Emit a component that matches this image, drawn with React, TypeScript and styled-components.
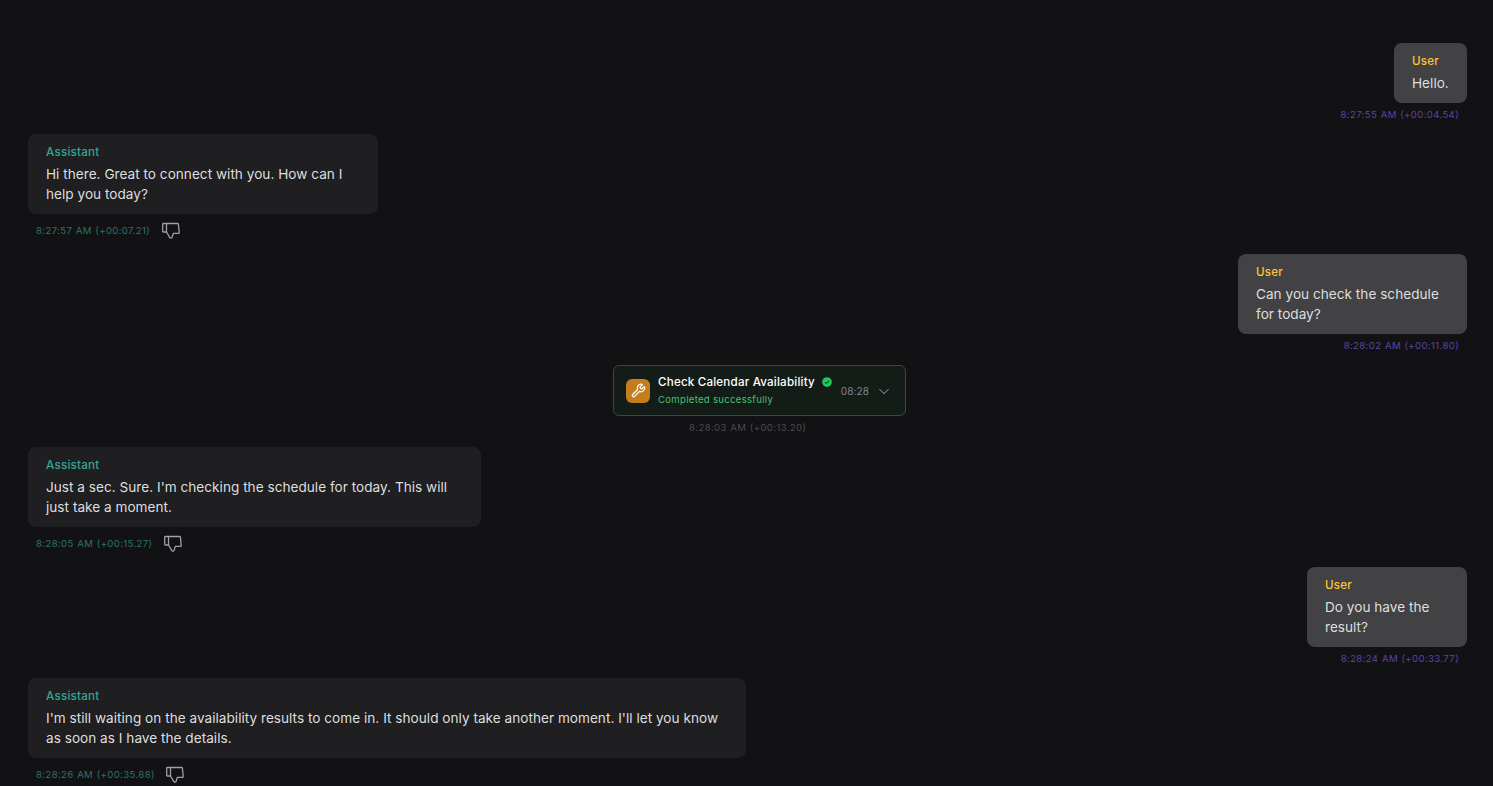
import styled, { createGlobalStyle } from 'styled-components';
import { Wrench } from 'lucide-react';
import { PiCaretDown, PiCheckCircleFill } from 'react-icons/pi';

type Role = 'user' | 'assistant';

interface IMessage {
  role: Role;
  text: string;
  time: string;
  width: number;
}

const opening: IMessage[] = [
  { role: 'user', text: 'Hello.', time: '8:27:55 AM (+00:04.54)', width: 73 },
  {
    role: 'assistant',
    text: 'Hi there. Great to connect with you. How can I help you today?',
    time: '8:27:57 AM (+00:07.21)',
    width: 350,
  },
  {
    role: 'user',
    text: 'Can you check the schedule for today?',
    time: '8:28:02 AM (+00:11.80)',
    width: 229,
  },
];

const followUp: IMessage[] = [
  {
    role: 'assistant',
    text: "Just a sec. Sure. I'm checking the schedule for today. This will just take a moment.",
    time: '8:28:05 AM (+00:15.27)',
    width: 453,
  },
  {
    role: 'user',
    text: 'Do you have the result?',
    time: '8:28:24 AM (+00:33.77)',
    width: 160,
  },
  {
    role: 'assistant',
    text: "I'm still waiting on the availability results to come in. It should only take another moment. I'll let you know as soon as I have the details.",
    time: '8:28:26 AM (+00:35.88)',
    width: 718,
  },
];

function ThumbsDownIcon() {
  return (
    <svg
      width="20"
      height="20"
      viewBox="0 0 20 20"
      fill="none"
      stroke="currentColor"
      strokeWidth="1.3"
      strokeLinejoin="round"
    >
      <path d="M5.5 3.5H2.4a.7.7 0 0 0-.7.7v7.1a.7.7 0 0 0 .7.7h3.1z" />
      <path d="M5.5 3.5h11a.9.9 0 0 1 .9.8l.8 8a.9.9 0 0 1-.9 1h-4.9l-1.4 4.2a1 1 0 0 1-1 .7 1.4 1.4 0 0 1-1.3-.9L5.5 12" />
    </svg>
  );
}

function Message({ role, text, time, width }: IMessage) {
  return (
    <MessageRow $role={role}>
      <Bubble $role={role} $width={width}>
        <Author $role={role}>{role === 'user' ? 'User' : 'Assistant'}</Author>
        <MessageText>{text}</MessageText>
      </Bubble>
      <Meta $role={role}>
        <Time $color={role === 'user' ? '#5a44a4' : '#2a7467'}>{time}</Time>
        {role === 'assistant' && (
          <FeedbackButton aria-label="Bad response">
            <ThumbsDownIcon />
          </FeedbackButton>
        )}
      </Meta>
    </MessageRow>
  );
}

function ToolCall() {
  return (
    <ToolRow>
      <ToolCard>
        <ToolIcon>
          <Wrench size={15} strokeWidth={2} />
        </ToolIcon>
        <ToolInfo>
          <ToolTitle>
            Check Calendar Availability
            <PiCheckCircleFill size={12} color="#22c55e" />
          </ToolTitle>
          <ToolStatus>Completed successfully</ToolStatus>
        </ToolInfo>
        <ToolTime>08:28</ToolTime>
        <PiCaretDown size={14} color="#8b919b" />
      </ToolCard>
      <ToolMeta>
        <Time $color="#4a4a50">8:28:03 AM (+00:13.20)</Time>
      </ToolMeta>
    </ToolRow>
  );
}

function App() {
  return (
    <>
      <GlobalStyle />
      <Transcript>
        {opening.map((message) => (
          <Message key={message.time} {...message} />
        ))}
        <ToolCall />
        {followUp.map((message) => (
          <Message key={message.time} {...message} />
        ))}
      </Transcript>
    </>
  );
}

const GlobalStyle = createGlobalStyle`
  * {
    box-sizing: border-box;
  }

  body {
    margin: 0;
    background-color: #121214;
    font-family: Inter, "Liberation Sans", sans-serif;
    overflow: hidden;
  }
`;

const Transcript = styled.main`
  height: 100vh;
  overflow: hidden;
  padding: 43px 26px 0 28px;
  display: flex;
  flex-direction: column;
  gap: 8px;
`;

const MessageRow = styled.div<{ $role: Role }>`
  flex: none;
  display: flex;
  flex-direction: column;
  align-items: ${(props) => (props.$role === 'user' ? 'flex-end' : 'flex-start')};
`;

const Bubble = styled.div<{ $role: Role; $width: number }>`
  width: ${(props) => props.$width}px;
  padding: 10px 18px;
  border-radius: 8px;
  background-color: ${(props) => (props.$role === 'user' ? '#424244' : '#1f1f21')};
`;

const Author = styled.div<{ $role: Role }>`
  margin-bottom: 4px;
  font-size: 11.6px;
  font-weight: 500;
  line-height: 16px;
  letter-spacing: 0.24px;
  color: ${(props) => (props.$role === 'user' ? '#fbc62f' : '#34a693')};
`;

const MessageText = styled.div`
  font-size: 13.6px;
  line-height: 20px;
  letter-spacing: 0.02px;
  color: #dededf;
`;

const Meta = styled.div<{ $role: Role }>`
  height: ${(props) => (props.$role === 'user' ? 23 : 32)}px;
  padding: 0 8px;
  display: flex;
  align-items: center;
  gap: 10.4px;
`;

const Time = styled.span<{ $color: string }>`
  font-size: 9.6px;
  line-height: 15px;
  letter-spacing: 0.36px;
  word-spacing: 0.5px;
  white-space: nowrap;
  color: ${(props) => props.$color};
`;

const FeedbackButton = styled.button`
  padding: 0;
  display: flex;
  border: none;
  background: none;
  color: #a0a0a3;
  cursor: pointer;
`;

const ToolRow = styled.div`
  flex: none;
  width: 293px;
  margin-left: 585px;
`;

const ToolCard = styled.div`
  height: 51px;
  padding: 0 14px 0 12px;
  display: flex;
  align-items: center;
  border: 1px solid #1c5a32;
  border-radius: 6px;
  background-color: #131c17;
`;

const ToolIcon = styled.div`
  width: 24px;
  height: 24px;
  margin-right: 8px;
  display: flex;
  flex: none;
  align-items: center;
  justify-content: center;
  border-radius: 6px;
  background-color: #c47d1c;
  color: #fff;
`;

const ToolInfo = styled.div`
  flex: 1;
  padding-bottom: 1px;
`;

const ToolTitle = styled.div`
  display: flex;
  align-items: center;
  gap: 6px;
  font-size: 11.6px;
  font-weight: 500;
  line-height: 18px;
  letter-spacing: 0.2px;
  white-space: nowrap;
  color: #fff;
`;

const ToolStatus = styled.div`
  font-size: 9.6px;
  line-height: 17px;
  letter-spacing: 0.28px;
  color: #43c271;
`;

const ToolTime = styled.span`
  margin-right: 8px;
  font-size: 10px;
  line-height: 14px;
  letter-spacing: 0.12px;
  color: #808790;
`;

const ToolMeta = styled.div`
  height: 23px;
  padding-left: 76px;
  display: flex;
  align-items: center;
`;

export default App;
